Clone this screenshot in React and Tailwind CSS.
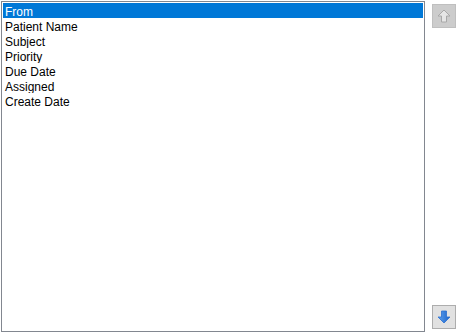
export default function App() {
  const items = ["From", "Patient Name", "Subject", "Priority", "Due Date", "Assigned", "Create Date"];
  return (
    <div className="w-[466px] h-[335px] bg-white flex" style={{ fontFamily: '"Liberation Sans", Arial, sans-serif' }}>
      <div className="ml-[1px] mt-[1px] w-[424px] h-[331px] border border-[#828790] p-[1px]">
        {items.map((t, i) => (
          <div
            key={t}
            className={`h-[15px] leading-[19px] text-[12px] pl-[2px] overflow-hidden ${i === 0 ? "bg-[#0078d7] text-white" : "text-black"}`}
          >
            {t}
          </div>
        ))}
      </div>
      <div className="ml-[7px] flex flex-col justify-between py-[4px] h-[333px]">
        <div className="w-[24px] h-[24px] border border-[#bfbfbf] bg-[#cccccc] flex items-center justify-center">
          <svg width="14" height="14" viewBox="0 0 14 14">
            <path d="M7 1 L13 7 L9.5 7 L9.5 13 L4.5 13 L4.5 7 L1 7 Z" fill="#e6e6e6" stroke="#a8a8a8" strokeWidth="1" />
          </svg>
        </div>
        <div className="w-[24px] h-[24px] border border-[#adadad] bg-[#e1e1e1] flex items-center justify-center">
          <svg width="14" height="14" viewBox="0 0 14 14">
            <defs>
              <linearGradient id="g" x1="0" y1="0" x2="1" y2="0">
                <stop offset="0" stopColor="#5aa0f0" />
                <stop offset="1" stopColor="#1e64c8" />
              </linearGradient>
            </defs>
            <path d="M4.5 1 L9.5 1 L9.5 7 L13 7 L7 13 L1 7 L4.5 7 Z" fill="url(#g)" stroke="#2a6fd0" strokeWidth="0.8" />
          </svg>
        </div>
      </div>
    </div>
  );
}
